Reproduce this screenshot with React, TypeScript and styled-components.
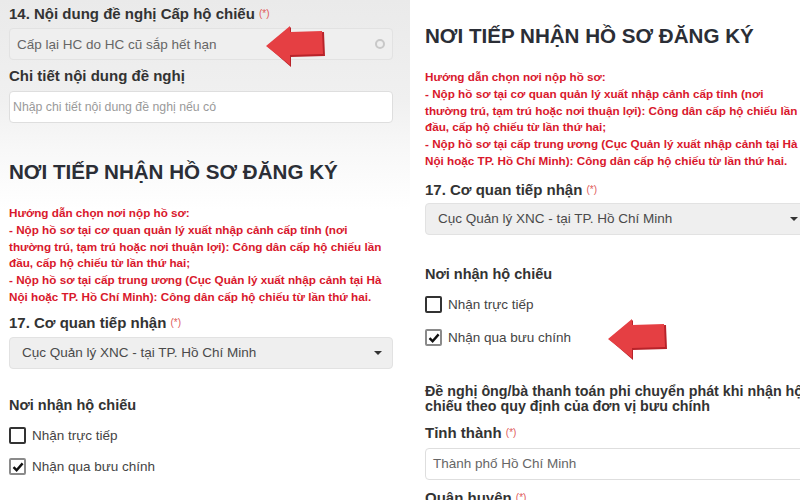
import React from "react";
import styled, { createGlobalStyle } from "styled-components";

const GlobalStyle = createGlobalStyle`
  html, body {
    margin: 0;
    padding: 0;
    background: #fff;
  }
  body {
    font-family: "Liberation Sans", Arial, sans-serif;
  }
`;

const guideLines = [
  "Hướng dẫn chọn nơi nộp hồ sơ:",
  "- Nộp hồ sơ tại cơ quan quản lý xuất nhập cảnh cấp tỉnh (nơi",
  "thường trú, tạm trú hoặc nơi thuận lợi): Công dân cấp hộ chiếu lần",
  "đầu, cấp hộ chiếu từ lần thứ hai;",
  "- Nộp hồ sơ tại cấp trung ương (Cục Quản lý xuất nhập cảnh tại Hà",
  "Nội hoặc TP. Hồ Chí Minh): Công dân cấp hộ chiếu từ lần thứ hai.",
];

function Arrow() {
  return (
    <svg width="60" height="42" viewBox="0 0 60 42">
      <polygon
        points="2,21 25,1 25,7 58,6 59,30 25,31 25,41"
        fill="#b8232a"
      />
      <polygon
        points="0,20 24,0 24,6 56,5 57,28 24,29 24,39"
        fill="#e53f43"
      />
    </svg>
  );
}

function Required() {
  return <Star>(*)</Star>;
}

function CheckBox({ checked }: { checked?: boolean }) {
  return (
    <Box $checked={checked}>
      {checked && (
        <svg width="12" height="12" viewBox="0 0 12 12">
          <path
            d="M1.5 6.2 L4.6 9.2 L10.6 2.4"
            fill="none"
            stroke="#111"
            strokeWidth="2.4"
          />
        </svg>
      )}
    </Box>
  );
}

function RegistrationSection({ right }: { right?: boolean }) {
  return (
    <>
      <Heading>NƠI TIẾP NHẬN HỒ SƠ ĐĂNG KÝ</Heading>
      <Guide>
        {guideLines.map((l) => (
          <div key={l}>{l}</div>
        ))}
      </Guide>
      <Label $top={right ? 12 : 9}>
        17. Cơ quan tiếp nhận <Required />
      </Label>
      <Select $tone="gray" $top={right ? 5 : 6}>
        <SelectText $dark>Cục Quản lý XNC - tại TP. Hồ Chí Minh</SelectText>
        <Caret />
      </Select>
      <SubLabel $top={right ? 31 : 28}>Nơi nhận hộ chiếu</SubLabel>
      <CheckList $gap={right ? 13 : 11}>
        <CheckRow>
          <CheckBox />
          <span>Nhận trực tiếp</span>
        </CheckRow>
        <CheckRow>
          <CheckBox checked />
          <span>Nhận qua bưu chính</span>
        </CheckRow>
      </CheckList>
    </>
  );
}

export default function App() {
  return (
    <Page>
      <GlobalStyle />
      <LeftPanel>
        <Content>
          <Label $top={6}>
            14. Nội dung đề nghị Cấp hộ chiếu <Required />
          </Label>
          <Select $tone="gray" $top={6}>
            <SelectText>Cấp lại HC do HC cũ sắp hết hạn</SelectText>
            <Ring />
            <ArrowSpot $left={256} $top={-3}>
              <Arrow />
            </ArrowSpot>
          </Select>
          <Label $top={8}>Chi tiết nội dung đề nghị</Label>
          <Select $tone="white" $top={7} $tight>
            <Placeholder>Nhập chi tiết nội dung đề nghị nếu có</Placeholder>
          </Select>
          <Spacer $h={36} />
          <RegistrationSection />
        </Content>
      </LeftPanel>
      <RightPanel>
        <Content>
          <Spacer $h={23} />
          <RegistrationSection right />
          <ArrowSpot $left={183} $top={319}>
            <Arrow />
          </ArrowSpot>
          <Note>
            Đề nghị ông/bà thanh toán phi chuyển phát khi nhận hộ
            <br />
            chiếu theo quy định của đơn vị bưu chính
          </Note>
          <Label $top={10}>
            Tỉnh thành <Required />
          </Label>
          <Select $tone="white" $top={7}>
            <SelectText>Thành phố Hồ Chí Minh</SelectText>
          </Select>
          <Label $top={10}>
            Quận huyện <Required />
          </Label>
        </Content>
      </RightPanel>
    </Page>
  );
}

const Page = styled.div`
  width: 800px;
  height: 500px;
  display: flex;
  overflow: hidden;
  background: #fff;
`;

const LeftPanel = styled.section`
  width: 410px;
  flex: none;
  padding: 0 17px 0 9px;
  box-sizing: border-box;
  background: linear-gradient(
    180deg,
    #eaeaea 0%,
    #f0f0f0 20%,
    #f8f8f8 30%,
    #ffffff 42%
  );
`;

const RightPanel = styled.section`
  flex: 1;
  padding-left: 15px;
  overflow: hidden;
  background: #fff;
`;

const Content = styled.div`
  position: relative;
  width: 384px;
  display: flex;
  flex-direction: column;
`;

const Spacer = styled.div<{ $h: number }>`
  height: ${(p) => p.$h}px;
  flex: none;
`;

const Label = styled.div<{ $top: number }>`
  margin-top: ${(p) => p.$top}px;
  font-size: 15px;
  line-height: 16px;
  font-weight: 700;
  color: #333;
  white-space: nowrap;
`;

const SubLabel = styled(Label)`
  font-size: 14.5px;
`;

const Star = styled.span`
  font-size: 10px;
  font-weight: 400;
  color: #e05a5a;
  vertical-align: 2px;
`;

const Select = styled.div<{
  $tone: "gray" | "white";
  $top: number;
  $tight?: boolean;
}>`
  position: relative;
  margin-top: ${(p) => p.$top}px;
  height: 32px;
  box-sizing: border-box;
  display: flex;
  align-items: center;
  padding: 0 9px 0 ${(p) => (p.$tight ? 3 : 7)}px;
  border-radius: 4px;
  border: 1px solid ${(p) => (p.$tone === "gray" ? "#e2e2e2" : "#dedede")};
  background: ${(p) => (p.$tone === "gray" ? "#efefef" : "#ffffff")};
`;

const SelectText = styled.span<{ $dark?: boolean }>`
  flex: 1;
  font-size: 13.5px;
  color: ${(p) => (p.$dark ? "#4a4a4a" : "#666")};
  white-space: nowrap;
  padding-left: ${(p) => (p.$dark ? 5 : 0)}px;
`;

const Placeholder = styled.span`
  font-size: 12.3px;
  color: #9a9a9a;
  white-space: nowrap;
`;

const Ring = styled.span`
  width: 6px;
  height: 6px;
  border-radius: 50%;
  border: 2px solid #c8c8c8;
  margin-right: -2px;
`;

const Caret = styled.span`
  width: 0;
  height: 0;
  border-left: 4px solid transparent;
  border-right: 4px solid transparent;
  border-top: 4px solid #333;
  margin-right: 1px;
`;

const ArrowSpot = styled.div<{ $left: number; $top: number }>`
  position: absolute;
  left: ${(p) => p.$left}px;
  top: ${(p) => p.$top}px;
  line-height: 0;
`;

const Heading = styled.h2`
  margin: 0;
  font-size: 20.6px;
  line-height: 26px;
  font-weight: 700;
  color: #2b2e36;
  white-space: nowrap;
`;

const Guide = styled.div`
  margin-top: 20px;
  font-size: 11.7px;
  line-height: 16.8px;
  font-weight: 700;
  color: #d9182c;
  white-space: nowrap;
`;

const CheckList = styled.div<{ $gap: number }>`
  margin-top: 13px;
  display: flex;
  flex-direction: column;
  gap: ${(p) => p.$gap}px;
`;

const CheckRow = styled.label`
  display: flex;
  align-items: center;
  gap: 6px;
  height: 20px;
  font-size: 13.5px;
  color: #444;
`;

const Box = styled.span<{ $checked?: boolean }>`
  width: 17px;
  height: 17px;
  box-sizing: border-box;
  border-radius: 2px;
  border: 2px solid ${(p) => (p.$checked ? "#8a8a8a" : "#333")};
  background: #fff;
  display: flex;
  align-items: center;
  justify-content: center;
`;

const Note = styled.div`
  margin-top: 36px;
  font-size: 14.3px;
  line-height: 15.5px;
  font-weight: 700;
  color: #333;
  white-space: nowrap;
`;
